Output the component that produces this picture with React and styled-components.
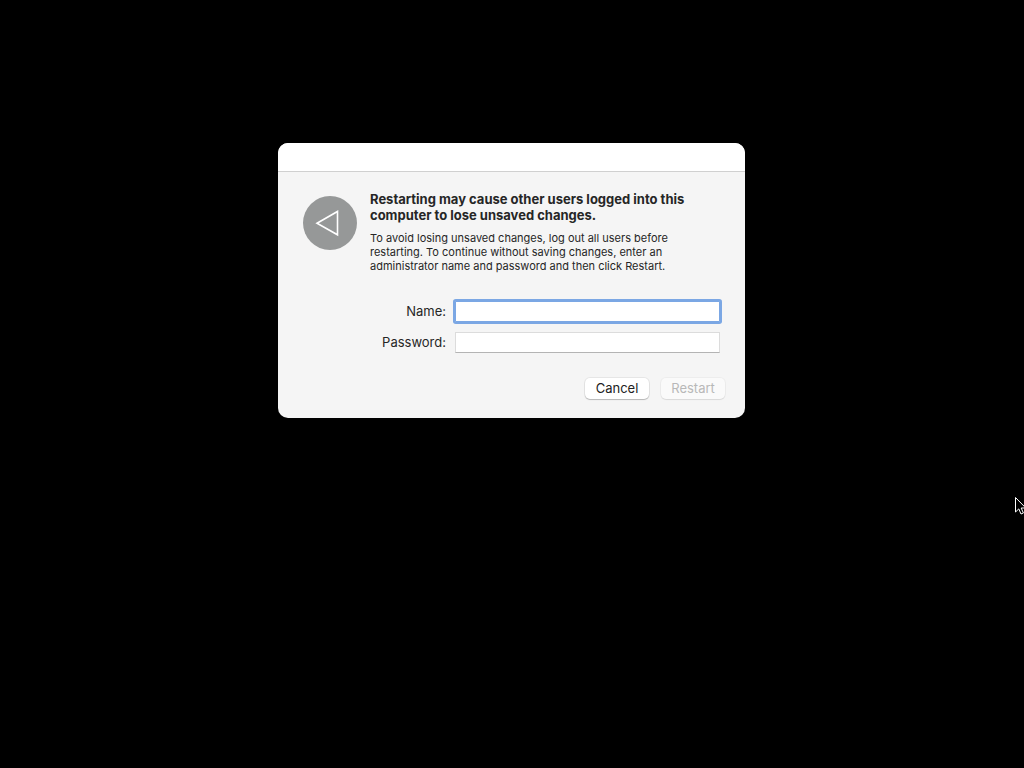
import React, { useState } from "react";
import styled, { createGlobalStyle } from "styled-components";

const GlobalStyle = createGlobalStyle`
  *, *::before, *::after { box-sizing: border-box; }
  body {
    margin: 0;
    background: #000;
    color: #262626;
    font-family: Inter, "Liberation Sans", sans-serif;
    font-size: 13px;
    line-height: 16px;
  }
`;

const Screen = styled.main`
  position: relative;
  display: flex;
  justify-content: center;
  align-items: flex-start;
  min-height: 100vh;
  padding: 143px 17px 16px 16px;
  overflow: hidden;
`;

const Dialog = styled.section`
  width: 100%;
  max-width: 467px;
  border-radius: 10px;
  background: #f5f5f5;
  overflow: hidden;
`;

const TitleBar = styled.header`
  height: 29px;
  background: #fff;
  border-bottom: 1px solid #d0d0d0;
`;

const Content = styled.form`
  padding: 19px 20px 19px 25px;
`;

const Message = styled.div`
  display: flex;
  gap: 13px;
`;

const BadgeIcon = styled.svg`
  flex: none;
  width: 54px;
  height: 54px;
  margin-top: 5px;
`;

const MessageText = styled.div`
  max-width: 330px;
`;

const Heading = styled.h1`
  margin: 0;
  font-size: 13px;
  line-height: 16px;
  font-weight: 700;
`;

const Detail = styled.p`
  margin: 8px 0 0;
  font-size: 11px;
  line-height: 14px;
`;

const Fields = styled.div`
  display: grid;
  grid-template-columns: 143px 1fr;
  gap: 10px 9px;
  align-items: start;
  margin: 28px 5px 0 0;
`;

const Label = styled.label`
  line-height: 20px;
  text-align: right;
`;

const TextField = styled.input`
  width: 100%;
  height: 21px;
  padding: 0 4px;
  border: 1px solid #dcdcdc;
  border-bottom-color: #b4b4b4;
  border-radius: 0;
  background: #fff;
  font: inherit;
  color: inherit;
  caret-color: transparent;
  outline: none;

  &:focus {
    border-color: #7ba7e4;
    border-radius: 1px;
    box-shadow: 0 0 0 2px #7ba7e4;
  }
`;

const Actions = styled.div`
  display: flex;
  justify-content: flex-end;
  gap: 12px;
  margin-top: 25px;
`;

const Button = styled.button`
  width: 64px;
  height: 21px;
  padding: 0 0 2px;
  border: 0;
  border-radius: 5px;
  background: #fff;
  box-shadow: 0 0 0 1px rgba(0, 0, 0, 0.06), 0 1px 1px rgba(0, 0, 0, 0.2);
  font: inherit;
  color: #222;

  &:disabled {
    background: #fafafa;
    box-shadow: 0 0 0 1px rgba(0, 0, 0, 0.03), 0 1px 1px rgba(0, 0, 0, 0.08);
    color: #b8b8b8;
  }
`;

const Pointer = styled.svg`
  position: absolute;
  top: 496px;
  right: -3px;
  width: 13px;
  height: 20px;
`;

export default function App() {
  const [name, setName] = useState("");
  const [password, setPassword] = useState("");

  return (
    <>
      <GlobalStyle />
      <Screen>
        <Dialog role="dialog" aria-labelledby="heading" aria-describedby="detail">
          <TitleBar />
          <Content onSubmit={(event) => event.preventDefault()}>
            <Message>
              <BadgeIcon viewBox="0 0 54 54" aria-hidden="true">
                <circle cx="27" cy="27" r="27" fill="#969898" />
                <path d="M14 27.3 34.5 15.5V38.8Z" fill="none" stroke="#fff" strokeWidth="1.6" />
              </BadgeIcon>
              <MessageText>
                <Heading id="heading">
                  Restarting may cause other users logged into this
                  <br />
                  computer to lose unsaved changes.
                </Heading>
                <Detail id="detail">
                  To avoid losing unsaved changes, log out all users before
                  <br />
                  restarting. To continue without saving changes, enter an
                  <br />
                  administrator name and password and then click Restart.
                </Detail>
              </MessageText>
            </Message>
            <Fields>
              <Label htmlFor="name">Name:</Label>
              <TextField
                id="name"
                autoFocus
                autoComplete="off"
                value={name}
                onChange={(event) => setName(event.target.value)}
              />
              <Label htmlFor="password">Password:</Label>
              <TextField
                id="password"
                type="password"
                autoComplete="off"
                value={password}
                onChange={(event) => setPassword(event.target.value)}
              />
            </Fields>
            <Actions>
              <Button type="button">Cancel</Button>
              <Button type="submit" disabled={!name || !password}>
                Restart
              </Button>
            </Actions>
          </Content>
        </Dialog>
        <Pointer viewBox="0 0 13 20" aria-hidden="true">
          <path
            d="M1.5 1.5V16L4.8 12.9L7 18L9.4 17L7.2 12H11.8Z"
            fill="#000"
            stroke="#fff"
            strokeWidth="1"
          />
        </Pointer>
      </Screen>
    </>
  );
}
